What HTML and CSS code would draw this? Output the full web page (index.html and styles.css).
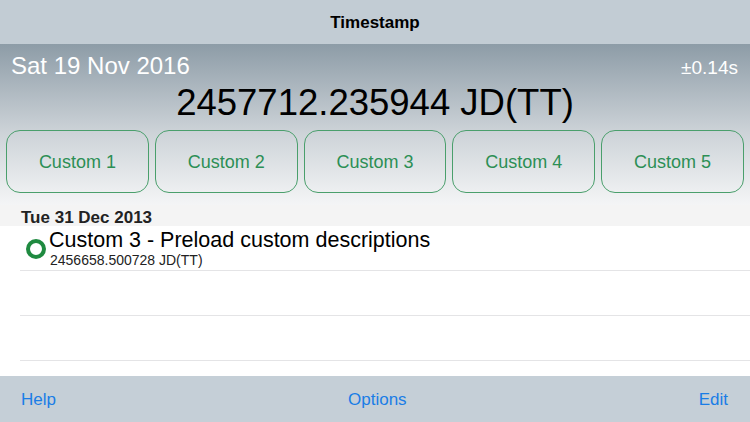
FILE: index.html
```html
<!DOCTYPE html>
<html lang="en">
<head>
  <meta charset="utf-8">
  <meta name="viewport" content="width=device-width, initial-scale=1.0">
  <title>Timestamp</title>
  <link rel="stylesheet" href="styles.css">
</head>
<body>
  <!-- Navigation bar -->
  <div class="navbar">Timestamp</div>

  <!-- Current time display and quick buttons -->
  <div class="header">
    <div class="header-row">
      <span class="date">Sat 19 Nov 2016</span>
      <span class="accuracy">±0.14s</span>
    </div>
    <div class="julian">2457712.235944 JD(TT)</div>
    <div class="button-row">
      <button class="custom-button">Custom 1</button>
      <button class="custom-button">Custom 2</button>
      <button class="custom-button">Custom 3</button>
      <button class="custom-button">Custom 4</button>
      <button class="custom-button">Custom 5</button>
    </div>
  </div>

  <!-- Saved timestamps -->
  <div class="list">
    <div class="section-header">Tue 31 Dec 2013</div>
    <div class="row">
      <span class="marker"></span>
      <div class="row-text">
        <div class="row-title">Custom 3 - Preload custom descriptions</div>
        <div class="row-sub">2456658.500728 JD(TT)</div>
      </div>
    </div>
    <div class="row empty"></div>
    <div class="row empty"></div>
  </div>

  <!-- Bottom toolbar -->
  <div class="toolbar">
    <a href="#">Help</a>
    <a href="#">Options</a>
    <a href="#">Edit</a>
  </div>
</body>
</html>
```

FILE: styles.css
```css
body {
  font-family: "Liberation Sans", Arial, sans-serif;
  margin: 0;
  width: 750px;
  height: 422px;
  display: flex;
  flex-direction: column;
  overflow: hidden;
  background-color: #fff;
  color: #000;
}

.navbar {
  height: 44px;
  line-height: 46px;
  flex-shrink: 0;
  background-color: #c2ccd4;
  text-align: center;
  font-size: 17px;
  font-weight: bold;
}

.header {
  flex-shrink: 0;
  height: 161px;
  box-sizing: border-box;
  padding: 8px 6px 12px;
  background: linear-gradient(#8d9ca7, #cdd3d8 55%, #f4f5f6);
}

.header-row {
  display: flex;
  justify-content: space-between;
  align-items: baseline;
  padding: 0 6px 0 5px;
  color: #fff;
}

.date {
  font-size: 24px;
  line-height: 28px;
}

.accuracy {
  font-size: 19px;
}

.julian {
  font-size: 36.5px;
  line-height: 40px;
  text-align: center;
  margin-top: 3px;
}

.button-row {
  display: flex;
  gap: 6px;
  margin-top: 7px;
}

.custom-button {
  flex: 1;
  height: 63px;
  background: transparent;
  border: 1.5px solid #4a9f6c;
  border-radius: 14px;
  color: #2c8f55;
  font-family: inherit;
  font-size: 18px;
  padding: 2px 0 0;
}

.list {
  flex: 1;
}

.section-header {
  height: 21px;
  box-sizing: border-box;
  padding: 2px 0 0 21px;
  line-height: 22px;
  background-color: #f4f4f4;
  font-size: 17px;
  font-weight: bold;
  color: #222;
}

.row {
  height: 45px;
  box-sizing: border-box;
  display: flex;
  align-items: flex-start;
  padding-left: 26px;
  position: relative;
}

.row::after {
  content: "";
  position: absolute;
  left: 20px;
  right: 0;
  bottom: 0;
  border-bottom: 1px solid #e4e4e6;
}

.row:first-of-type::after {
  left: 67px;
}

.row-text {
  margin-left: 3px;
}

.marker {
  width: 12px;
  height: 12px;
  border: 4px solid #1f8a40;
  border-radius: 50%;
  margin-top: 13px;
  flex-shrink: 0;
}

.row-title {
  font-size: 21.5px;
  line-height: 24px;
  margin-top: 2px;
}

.row-sub {
  font-size: 14px;
  line-height: 16px;
  padding-left: 1px;
  color: #222;
}

.toolbar {
  height: 46px;
  flex-shrink: 0;
  display: flex;
  justify-content: space-between;
  align-items: center;
  padding: 2px 22px 0 21px;
  box-sizing: border-box;
  background-color: #c5cfd7;
}

.toolbar a {
  color: #1a7de6;
  font-size: 17px;
  text-decoration: none;
}
```
